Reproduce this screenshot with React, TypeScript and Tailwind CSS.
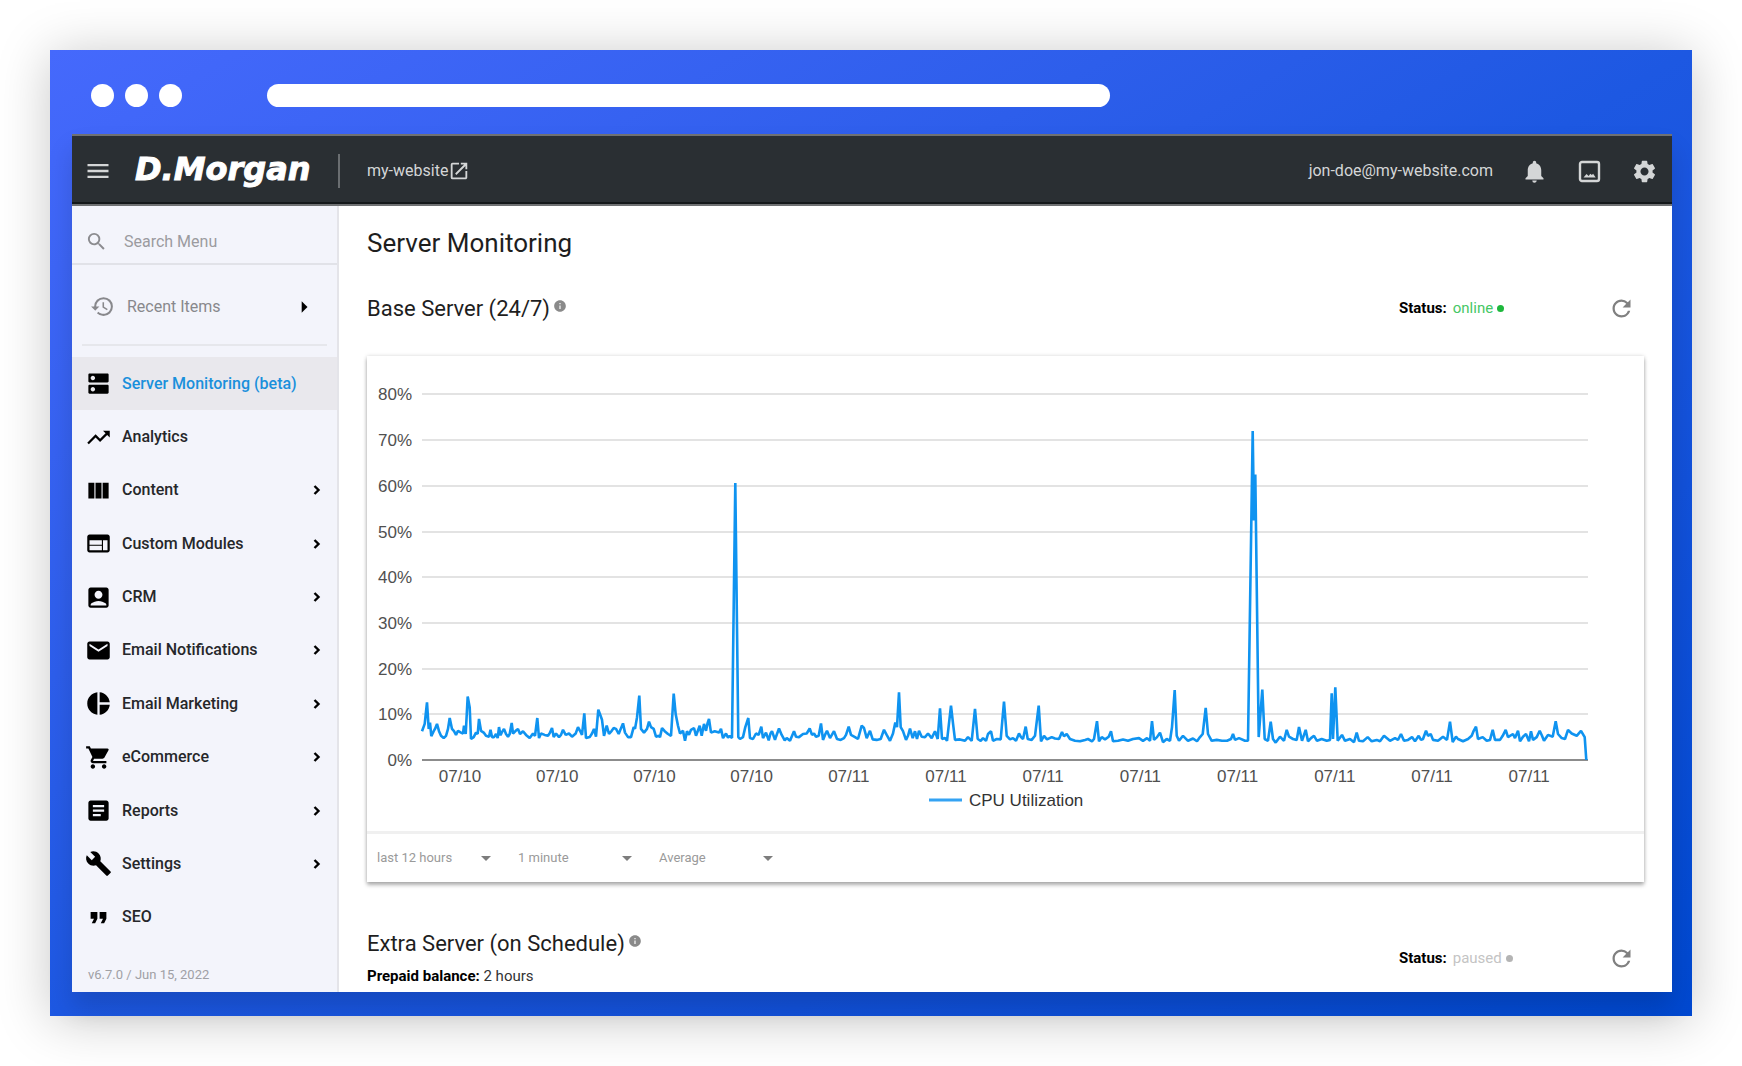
import { useState } from "react";
import type { IconType } from "react-icons";
import {
  MdAccountBox,
  MdArrowDropDown,
  MdArrowRight,
  MdArticle,
  MdBuild,
  MdDns,
  MdEmail,
  MdFormatQuote,
  MdHistory,
  MdInfo,
  MdLaunch,
  MdMenu,
  MdNotifications,
  MdPieChart,
  MdRefresh,
  MdSearch,
  MdSettings,
  MdShoppingCart,
  MdTrendingUp,
  MdViewColumn,
  MdWeb,
} from "react-icons/md";

type MenuItem = {
  label: string;
  icon: IconType;
  expandable?: boolean;
};

const menuItems: MenuItem[] = [
  { label: "Server Monitoring (beta)", icon: MdDns },
  { label: "Analytics", icon: MdTrendingUp },
  { label: "Content", icon: MdViewColumn, expandable: true },
  { label: "Custom Modules", icon: MdWeb, expandable: true },
  { label: "CRM", icon: MdAccountBox, expandable: true },
  { label: "Email Notifications", icon: MdEmail, expandable: true },
  { label: "Email Marketing", icon: MdPieChart, expandable: true },
  { label: "eCommerce", icon: MdShoppingCart, expandable: true },
  { label: "Reports", icon: MdArticle, expandable: true },
  { label: "Settings", icon: MdBuild, expandable: true },
  { label: "SEO", icon: MdFormatQuote },
];

// "x,percent" samples, x runs from 0 to 1166
const cpuSamples = `
0,6.3 2.7,7.9 5,12.6 6.7,6.8 8,8.2 9.3,5.2 11.7,6.3 13,6.8 15,7.9 17,6.3 19,5.3 21.7,4.8 24,5.3 26,6.8 27.7,9.2 30,6.8 32,6.3 34,5.5
36,6.4 39,6 41,5.8 42,7.5 43.7,5.7 45.7,13.9 47.7,11.5 49,4.6 51.7,5 54,6 55.7,5.7 57,9 59,6.4 61.7,6 64,5.3 67,5.1 68.5,6.6 70,5
72,5 74,5.7 75.7,4.8 77,7.2 78.5,5.4 79.7,6 82,6.8 84,5.7 86,5.1 87.7,5.7 89.7,8.1 91,5.8 93.7,6.4 96,6.8 98,5.7 101,6.3 104,5.5
107.7,4.8 111,5.8 113,5.3 115.3,9.2 117,4.8 119,5.8 122.7,5.5 126,5.3 128,6 130,7 131.7,5 134,5.8 137,5 139,5.5 141,6.6 143.7,5.5
147,5.8 150,5.1 153.7,5.8 156,7.2 158,6.4 160,5.5 162.3,10.2 164,4.8 167.7,5 170,5.8 172,6.8 174,5.1 176.3,11 178,10 180,8.8 182,5.3
184.7,7.5 187,5.7 189.7,6.4 191.7,7 194,6.8 196.7,5.7 198.7,6.8 201,8 203,6 206,5 209,5 211.7,7.2 213,6.8 215,9.3 217.3,14.1 219,6.8
222,6 225,6.8 227,8.4 229,7.2 231.7,6.8 234,5.1 236.7,5.3 238,5 240,7 242.7,6.3 246,5.7 249,5.3 251.7,14.5 253.7,10 256,7.5 258,5.8
261,6.4 263,4.2 265,6.3 267,5.5 269,6.6 272,7 274,5.3 277.7,7.5 279.7,5.3 282,7.9 284,6.4 285.5,8 287,9 289,6 292.7,6.3 297,6 299,6.8
301,4.8 304,5.8 306,4.9 307.7,5.3 310,4.8 313.3,60.6 316.3,5 318,4.6 321,5 323.3,7.2 326.3,9.2 328,4.8 331,4.6 334,5.8 336.7,5.5
339.3,7.3 341,4.8 344,6 346.7,4.3 348.5,5.8 350,6.3 353,4.4 354,5.1 357,6.9 359.7,5.5 362.7,4.3 364.7,4.8 368,4.2 372,6.3 374,5.1 377,5
381,5.7 384.7,5.8 387.7,6.9 390,5.5 392,5.8 394,5.1 396.7,5.3 399,8 401,4.4 403,5.5 405,6.4 408,4.8 412,6.3 415,4.6 418.7,4.4 422,4.8
424,5.5 426.7,7.3 429,5.5 433,5 436,4.6 439.7,7.5 442,7 444.7,4.8 448,6.4 450.7,4.5 454.7,4.4 458.7,4.6 462,6.6 464.7,5.5 468,4.2
471,5.8 473.3,8.2 475,7.2 477,14.8 478.7,7.2 481,6.3 484,4.4 486,5.3 488,6.9 490.7,4.8 493,6.3 495,4.6 497,6.4 499.7,5.1 503,5 506,5.8
509.7,4.8 513,6.3 515.7,4.6 518,11.3 520,4.6 523,4.8 525,4.2 529,11.9 531,8 533,4.4 538,4.5 543,4.2 546,5 549.7,4.2 553,11.2 555.7,4.6
558.7,4.2 561,4.8 564,4.2 566,5.7 569,6.3 571,4.2 574.7,4.6 578.7,4.5 582,12.8 584.7,5.3 588,4.5 591,4.8 594,4.2 597,5.8 599,5 601,4.6
603.7,7.3 605.7,4.6 609.7,4.4 613,5.3 616.7,11.9 619,4.1 622,5.3 625,4.5 629.7,5 633,4.7 637,4.6 640,6.1 642,5.2 644.7,5.7 648,4.6
653,4.2 658,4.1 663,4.4 666,4.6 670,4.1 672,4.6 675,8.5 677,4.1 679.7,5 683,4.5 686.7,5.1 689,6.3 691,4.1 696,4.2 701,4.5 706,4.2
711,4.6 717,4.8 721,4.2 725,4.8 728,4.2 730,8.5 732,4.4 735,5 738,6 741,3.9 744.7,4.6 748,4.2 750,7.2 752.7,15.3 754.7,5.3 757,4.2
761,5.3 766,4.2 771,4.7 775,4.1 778,5 780.7,5.7 783.7,11.4 786,5.7 789.7,4.2 794.7,4.4 800,4.2 805,4.2 809,4.6 811,5.7 813,4.4 817,4.8
823,4.2 826,4.2 830.7,72 832,52.4 833.3,62.5 836.7,5 840.3,15.4 842.7,4.6 846,4.2 848.7,8.4 851,4.6 853.7,3.8 858,5.1 862,4.2 864.7,6.6
867,5.1 871,4.6 874.7,4.4 877,7.2 880,4.2 883.7,6.6 886,4.1 889,4.8 892,5.3 895,4.2 899.7,4.6 904.7,4.2 908,4.4 909.7,14.6 911,4.6
913.3,15.9 915.7,4.2 920,5.5 923,4.2 928,4.6 932,3.9 934.7,6 937,4.2 941,4.1 945.7,5 949.7,4.1 954.7,4.4 958,4.1 962,5.3 968,4.2 973,4.8
976,4.4 979,5.7 982,4.2 986,4.4 990,5 993,4.1 996.7,5.3 999,4.4 1001,4.6 1004,6.4 1006,5.3 1008.7,5.7 1011,4.4 1016,4.2 1021,5.1
1025,4.4 1028,8.4 1030.7,3.9 1034,5.1 1036,4.6 1041,4.1 1046,4.6 1049.7,5.3 1051.7,6.4 1054,7.3 1056,4.6 1060.7,5 1064.7,4.2 1068,4.4
1070.7,6.6 1073,4.4 1078,4.4 1080.7,5.3 1083.7,6.6 1086,5 1091,5.7 1093,4.8 1096,6.4 1098,4.1 1101,5.1 1104,5.7 1107,4.1 1109,6.3
1111,4.4 1114.7,5 1117.7,6.4 1120,5.3 1122,4.2 1126,5.5 1130.7,5.1 1133.7,8.5 1136,5.7 1139.7,4.8 1143,4.6 1146,6.6 1149.7,5.8
1154.7,5.3 1159,6.4 1162.7,5 1164.3,0`;

const PLOT_LEFT = 55;
const PLOT_RIGHT = 1221;
const PLOT_BOTTOM = 404;
const PERCENT_HEIGHT = 4.57;

const cpuPoints = cpuSamples
  .trim()
  .split(/\s+/)
  .map((sample) => {
    const [x, value] = sample.split(",").map(Number);
    return `${PLOT_LEFT + x},${(PLOT_BOTTOM - value * PERCENT_HEIGHT).toFixed(1)}`;
  })
  .join(" ");

const yTicks = [80, 70, 60, 50, 40, 30, 20, 10, 0];
const xTicks = [
  "07/10",
  "07/10",
  "07/10",
  "07/10",
  "07/11",
  "07/11",
  "07/11",
  "07/11",
  "07/11",
  "07/11",
  "07/11",
  "07/11",
];

const CpuChart = () => {
  return (
    <svg
      viewBox="0 0 1277 475"
      role="img"
      aria-label="CPU Utilization"
      className="block w-full font-['Liberation_Sans',sans-serif] text-[17px]"
    >
      {yTicks.map((tick) => {
        const y = Math.round(PLOT_BOTTOM - tick * PERCENT_HEIGHT);
        return (
          <g key={tick}>
            <line
              x1={PLOT_LEFT}
              x2={PLOT_RIGHT}
              y1={y}
              y2={y}
              stroke={tick === 0 ? "#8c8c8c" : "#e3e3e3"}
              strokeWidth={2}
            />
            <text x={45} y={y + 6} textAnchor="end" fill="#505050">
              {tick}%
            </text>
          </g>
        );
      })}
      {xTicks.map((label, i) => (
        <text
          key={i}
          x={93 + i * 97.2}
          y={426}
          textAnchor="middle"
          fill="#505050"
        >
          {label}
        </text>
      ))}
      <polyline
        points={cpuPoints}
        fill="none"
        stroke="#0f93f0"
        strokeWidth={2.6}
        strokeLinejoin="bevel"
      />
      <line x1={562} x2={595} y1={444} y2={444} stroke="#34a3f3" strokeWidth={3} />
      <text x={602} y={450} fill="#333">
        CPU Utilization
      </text>
    </svg>
  );
};

const PictureIcon = () => {
  return (
    <svg viewBox="0 0 27 27" className="size-[27px]" aria-hidden="true">
      <rect
        x="4"
        y="4"
        width="19"
        height="19"
        rx="2"
        fill="none"
        stroke="currentColor"
        strokeWidth="2.4"
      />
      <path d="M7.5 19.5l3-3.6 2.2 2 1.6-2.2 1.6 1.4 1.2-1.4 2.6 3.8z" fill="currentColor" />
    </svg>
  );
};

const Chevron = () => {
  return (
    <svg viewBox="0 0 20 20" className="ml-auto size-5" aria-hidden="true">
      <path
        d="M7.5 6l4 4-4 4"
        fill="none"
        stroke="#000"
        strokeWidth="2.4"
      />
    </svg>
  );
};

const BrowserBar = () => {
  return (
    <div className="flex h-[84px] items-center pt-[6px] pl-[19px]">
      <div className="flex shrink-0 gap-[11px]">
        <span className="size-[23px] rounded-full bg-white" />
        <span className="size-[23px] rounded-full bg-white" />
        <span className="size-[23px] rounded-full bg-white" />
      </div>
      <div className="ml-[85px] h-[23px] w-[843px] rounded-full bg-white" />
    </div>
  );
};

const Header = () => {
  return (
    <header className="flex h-[72px] items-center justify-between border-y-2 border-[#6f7173] bg-[#2a2f33] pt-[2px] pr-[14px] text-[#d4d6d7] shadow-[inset_0_-2px_0_#14181a]">
      <div className="flex items-center">
        <div className="flex w-[266px] items-center gap-[23px] pl-3">
          <button type="button" aria-label="Toggle menu">
            <MdMenu className="size-7" />
          </button>
          <a
            href="#"
            className="pb-[4px] font-['DejaVu_Sans',sans-serif] text-[32px] leading-9 font-bold text-white italic [-webkit-text-stroke:1px_white]"
          >
            D.Morgan
          </a>
        </div>
        <span className="h-[34px] w-[2px] bg-[#6a6e71]" />
        <a href="#" className="ml-[27px] flex items-center text-base">
          my-website
          <MdLaunch className="size-[22px]" />
        </a>
      </div>
      <div className="flex items-center gap-7">
        <span className="text-base">jon-doe@my-website.com</span>
        <button type="button" aria-label="Notifications">
          <MdNotifications className="size-[27px]" />
        </button>
        <button type="button" aria-label="Media">
          <PictureIcon />
        </button>
        <button type="button" aria-label="Settings">
          <MdSettings className="size-[27px]" />
        </button>
      </div>
    </header>
  );
};

const Sidebar = () => {
  const [active, setActive] = useState("Server Monitoring (beta)");

  return (
    <aside className="flex w-[267px] shrink-0 flex-col border-r-2 border-[#e4e4e9] bg-[#f3f4fb]">
      <label className="flex h-[59px] items-center gap-4 border-b-2 border-[#e1e2e8] pt-[14px] pl-[13px] text-[#8b8b8f]">
        <MdSearch className="size-[23px] shrink-0" />
        <input
          type="text"
          placeholder="Search Menu"
          aria-label="Search Menu"
          className="w-full min-w-0 bg-transparent text-base outline-none placeholder:text-[#9b9ba0]"
        />
      </label>
      <div className="mx-[10px] mb-[11px] flex h-[81px] items-center border-b-2 border-[#e6e7ec] pt-1">
        <button
          type="button"
          className="flex w-full items-center gap-3 pl-2 text-[#88888c]"
        >
          <MdHistory className="size-[25px]" />
          <span className="text-base">Recent Items</span>
          <MdArrowRight className="mr-[9px] ml-auto size-7 text-black" />
        </button>
      </div>
      <nav className="flex flex-1 flex-col">
        {menuItems.map(({ label, icon: Icon, expandable }) => (
          <a
            key={label}
            href="#"
            onClick={() => setActive(label)}
            className={`flex flex-1 items-center gap-[10px] pr-[10px] pl-[13px] text-base font-medium ${
              active === label ? "bg-[#e9e8ed] text-[#1a90dc]" : "text-[#26272a]"
            }`}
          >
            <Icon className="size-[27px] text-black" />
            {label}
            {expandable && <Chevron />}
          </a>
        ))}
      </nav>
      <p className="h-12 pt-[21px] pl-4 text-[13px] leading-5 text-[#a0a0a5]">
        v6.7.0 / Jun 15, 2022
      </p>
    </aside>
  );
};

const ServerStatus = ({ online }: { online?: boolean }) => {
  return (
    <div className="flex items-center text-[15px]">
      <div className="flex w-[209px] items-center">
        <span className="font-bold text-black">Status:</span>
        <span className={`ml-[6px] ${online ? "text-[#45c765]" : "text-[#c4c4c4]"}`}>
          {online ? "online" : "paused"}
        </span>
        <span
          className={`ml-1 size-[7px] rounded-full ${
            online ? "bg-[#1db83c]" : "bg-[#b4b4b4]"
          }`}
        />
      </div>
      <button type="button" aria-label="Refresh" className="mr-[9px]">
        <MdRefresh className="size-[27px] text-[#808080]" />
      </button>
    </div>
  );
};

const ServerTitle = ({ children }: { children: string }) => {
  return (
    <h2 className="flex h-9 items-center gap-[3px] text-[22px] text-[#1e1e1e]">
      {children}
      <MdInfo className="mb-1 size-[14px] text-[#8a8a8a]" />
    </h2>
  );
};

const FilterSelect = ({ label, value }: { label: string; value: string }) => {
  return (
    <div className="relative w-[121px]">
      <select
        aria-label={label}
        className="block h-6 w-full appearance-none bg-transparent text-[13px] text-[#9a9a9a] outline-none"
      >
        <option>{value}</option>
      </select>
      <MdArrowDropDown className="pointer-events-none absolute top-0 right-0 size-6 text-[#7d7d7d]" />
    </div>
  );
};

const App = () => {
  return (
    <div className="flex min-h-screen bg-white p-[50px] font-[Roboto,sans-serif]">
      <div className="flex min-w-0 flex-1 flex-col bg-linear-to-br from-[#4569fc] via-[#1d58e2] to-[#0048d0] pr-5 pb-6 pl-[22px] shadow-[0_4px_50px_rgba(0,0,0,0.22)]">
        <BrowserBar />
        <div className="flex flex-1 flex-col bg-white shadow-[0_16px_24px_rgba(0,0,0,0.14)]">
          <Header />
          <div className="flex flex-1">
            <Sidebar />
            <main className="min-w-0 flex-1 px-7 pt-5">
              <h1 className="text-[26px] leading-[34px] text-[#1e1e1e]">
                Server Monitoring
              </h1>

              <section>
                <div className="mt-[30px] flex items-center justify-between">
                  <ServerTitle>Base Server (24/7)</ServerTitle>
                  <ServerStatus online />
                </div>
                <div className="mt-[30px] shadow-[0_3px_4px_rgba(0,0,0,0.3),0_0_4px_rgba(0,0,0,0.14)]">
                  <CpuChart />
                  <div className="flex h-[51px] items-center gap-5 border-t-3 border-[#f0f0f0] pl-[10px]">
                    <FilterSelect label="Period" value="last 12 hours" />
                    <FilterSelect label="Interval" value="1 minute" />
                    <FilterSelect label="Statistic" value="Average" />
                  </div>
                </div>
              </section>

              <section className="mt-[43px] flex items-center justify-between">
                <div>
                  <ServerTitle>Extra Server (on Schedule)</ServerTitle>
                  <p className="text-[15px] leading-[30px] text-[#333]">
                    <b className="text-black">Prepaid balance:</b> 2 hours
                  </p>
                </div>
                <ServerStatus />
              </section>
            </main>
          </div>
        </div>
      </div>
    </div>
  );
};

export default App;
